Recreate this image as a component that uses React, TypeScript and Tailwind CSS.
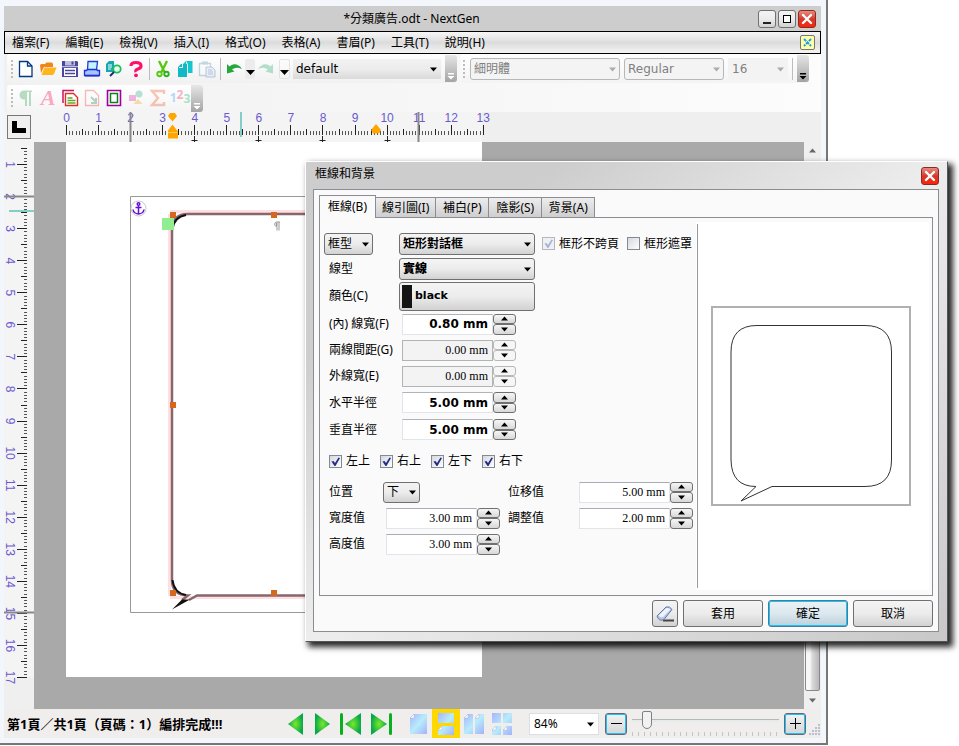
import React from "react";

const UNIT = 32.06;

const UI = "font-['Noto_Sans','Noto_Sans_CJK_TC',sans-serif]";
const WIDE = "font-['DejaVu_Sans','Noto_Sans_CJK_TC',sans-serif]";

function Arrow({ className = "" }: { className?: string }) {
  return (
    <svg width="9" height="5" viewBox="0 0 9 5" className={className} aria-hidden="true">
      <path d="M0 0h9L4.5 5z" fill="currentColor" />
    </svg>
  );
}

function Combo({
  label,
  options,
  wrap,
  select,
  arrow,
  disabled,
}: {
  label: string;
  options: string[];
  wrap: string;
  select: string;
  arrow: string;
  disabled?: boolean;
}) {
  return (
    <span className={`relative block shrink-0 ${wrap}`}>
      <select
        aria-label={label}
        disabled={disabled}
        className={`block h-full w-full appearance-none opacity-100 outline-none ${select}`}
      >
        {options.map((o) => (
          <option key={o}>{o}</option>
        ))}
      </select>
      <Arrow className={`pointer-events-none absolute top-1/2 -mt-0.5 ${arrow}`} />
    </span>
  );
}

const RAISED =
  "border border-[#707070] rounded-[3px] bg-linear-to-b from-[#f4f4f4] from-0% via-[#ececec] via-50% to-[#d2d2d2] to-100%";

/* ---------- window chrome ---------- */

function CloseButton() {
  return (
    <button
      aria-label="關閉"
      className="flex size-[18px] items-center justify-center rounded-[3px] border border-[#8c2a22] bg-linear-to-b from-[#e58a80] via-[#d8352a] via-50% to-[#fb2400]"
    >
      <svg width="12" height="12" viewBox="0 0 12 12">
        <path d="M2 2l8 8M10 2l-8 8" stroke="#fff" strokeWidth="2.4" strokeLinecap="round" />
      </svg>
    </button>
  );
}

function TitleBar() {
  return (
    <header className="flex h-[25px] shrink-0 items-center bg-[#cdcdcd] pr-[5px]">
      <span className="w-[61px]" />
      <h1 className="flex-1 text-center text-[12px] leading-4">*分類廣告.odt - NextGen</h1>
      <div className="flex gap-[2px]">
        <button aria-label="最小化" className={`flex size-[18px] items-end justify-center pb-[3px] ${RAISED}`}>
          <span className="h-[2px] w-[8px] bg-[#222]" />
        </button>
        <button aria-label="最大化" className={`flex size-[18px] items-center justify-center ${RAISED}`}>
          <span className="size-[8px] border border-black bg-white" />
        </button>
        <CloseButton />
      </div>
    </header>
  );
}

const MENUS = ["檔案(F)", "編輯(E)", "檢視(V)", "插入(I)", "格式(O)", "表格(A)", "書眉(P)", "工具(T)", "說明(H)"];

function MenuBar() {
  return (
    <nav className="flex h-[23px] shrink-0 items-center gap-[16px] border border-black bg-linear-to-b from-[#f7f7f7] from-0% via-[#dcdcdc] via-50% to-[#f4f4f4] to-100% pr-[5px] pl-[7px]">
      {MENUS.map((m) => (
        <button key={m} className="text-[12px] leading-4 whitespace-nowrap">
          {m}
        </button>
      ))}
      <button
        aria-label="關閉文件"
        className="ml-auto flex size-[15px] items-center justify-center rounded-[2px] border border-[#777] bg-[#ffffa8]"
      >
        <svg width="9" height="9" viewBox="0 0 9 9">
          <path d="M1 1l7 7M8 1L1 8" stroke="#1e9bf0" strokeWidth="2" strokeDasharray="3 1" />
        </svg>
      </button>
    </nav>
  );
}

/* ---------- toolbars ---------- */

function Grip() {
  return <span className="mx-[2px] h-[18px] w-[2px] border-l-2 border-dotted border-[#bdbdbd]" />;
}

function Sep() {
  return <span className="mx-[2px] h-[22px] w-px bg-[#bcbcc0]" />;
}

function Overflow({ dark }: { dark?: boolean }) {
  return (
    <button
      aria-label="更多工具"
      className="flex h-[27px] w-[12px] shrink-0 items-end justify-center rounded-r-[3px] bg-linear-to-b from-[#e6e6e6] to-[#a4a4a4] pb-[2px]"
    >
      <svg width="8" height="7" viewBox="0 0 8 7" fill={dark ? "#000" : "#fff"}>
        <path d="M1 0h6v1.5H1zM0.5 3h7L4 6.6z" />
      </svg>
    </button>
  );
}

function Tool({ label, children, faded }: { label: string; children: React.ReactNode; faded?: boolean }) {
  return (
    <button aria-label={label} className="flex h-[22px] w-[22px] shrink-0 items-center justify-center">
      <svg width="18" height="18" viewBox="0 0 18 18" fill="none" opacity={faded ? 0.32 : 1}>
        {children}
      </svg>
    </button>
  );
}

function ToolbarMain() {
  return (
    <div className="flex h-[29px] shrink-0 items-center">
      <div className="flex h-full items-center rounded-[3px] bg-linear-to-b from-white to-[#f1f1f1] pl-[2px]">
        <Grip />
        <Tool label="新增">
          <path d="M2.5 1.5h8l4.500 4.500v10.500H2.500z" fill="#fff" stroke="#003a80" strokeWidth="1.3" />
          <path d="M10.500 1.500V6H15" stroke="#003a80" strokeWidth="1.300" />
        </Tool>
        <Tool label="開啟">
          <path d="M1 5.500Q1 4 2.500 4H6l1.500-1.500H13L14 4v3H5L2 13z" fill="#f0861a" />
          <path d="M5.500 7.500h12L15 14q-.5 1-1.500 1H2.500z" fill="#ffb61e" />
        </Tool>
        <Tool label="儲存">
          <path d="M1 1h15l1 1v15H1z" fill="#4a45a0" />
          <path d="M3 8h12v8H3z" fill="#fff" />
          <path d="M4 1h10v4.500H4z" fill="#bdbddd" />
          <path d="M10.500 1.500h2v3h-2z" fill="#4a45a0" />
          <path d="M1 6.700h16" stroke="#fff" strokeWidth=".8" />
          <path d="M4 10.500h10M4 13.500h10" stroke="#4a45a0" strokeWidth="1.400" />
        </Tool>
        <Tool label="列印">
          <path d="M5 1.500h9.500l-1 8.500h-9z" fill="#c4f4ff" stroke="#1c3fd0" strokeWidth="1.300" />
          <path d="M1.500 10.500h2l1-1h9l1 1h2v5h-15z" fill="#a8c4ff" stroke="#1c2fd0" strokeWidth="1.300" />
          <path d="M2 15.700h14" stroke="#1c2fd0" strokeWidth="1.600" />
        </Tool>
        <Tool label="預覽列印">
          <path d="M1 4l3-3h5v11H1z" fill="#15a8b0" />
          <path d="M3 5h4M3 7h4M3 9h3" stroke="#fff" />
          <circle cx="12" cy="9" r="3.700" fill="#eafff0" stroke="#16c060" strokeWidth="1.800" />
          <path d="M9 12l-4 4" stroke="#222c70" strokeWidth="2" />
        </Tool>
        <Tool label="說明">
          <path d="M4 6Q4 2.500 9 2.500T14 6Q14 8 11 9T9 12" stroke="#ff0f6a" strokeWidth="3.200" />
          <circle cx="9" cy="15.300" r="1.900" fill="#ff0f6a" />
        </Tool>
        <Sep />
        <Tool label="剪下">
          <path d="M5 1l5.500 11M13 1L7.500 12" stroke="#55c810" strokeWidth="2.400" />
          <circle cx="5.500" cy="14" r="2.200" stroke="#55c810" strokeWidth="1.900" />
          <circle cx="12.500" cy="14" r="2.200" stroke="#2fae20" strokeWidth="1.900" />
        </Tool>
        <Tool label="複製">
          <path d="M7 4l3-3h6.500v12H7z" fill="#12c8cc" />
          <path d="M2 7l3-3h6v13H2z" fill="#12b8c4" />
          <path d="M6.500 4v3.500H3M11.500 3.500h-1V1.500M11.500 4v9.500" stroke="#fff" strokeWidth=".9" />
        </Tool>
        <Tool label="貼上" faded>
          <path d="M1.500 3.500h11v12h-11z" fill="#fff" stroke="#4a90a8" strokeWidth="1.400" />
          <path d="M4 1.500h6v3H4z" fill="#4a90a8" />
          <path d="M8 7h6l3 3v7H8z" fill="#cde" stroke="#3c58b0" />
          <path d="M10 10h4M10 12h5M10 14h5" stroke="#3c58b0" />
        </Tool>
        <Sep />
        <Tool label="復原">
          <path d="M2 4v9.500l7.500-2-2.500-2Q11 6.500 17 9 13 3.500 8 4.500 6 5 4.500 6.500z" fill="#22a83c" />
        </Tool>
        <button aria-label="復原清單" className="flex h-[20px] w-[10px] items-end justify-center rounded-[2px] bg-[#ececec] pb-[4px]">
          <Arrow />
        </button>
        <Tool label="重做" faded>
          <path d="M16 4v9.500l-7.500-2 2.500-2Q7 6.500 1 9 5 3.500 10 4.500 12 5 13.500 6.500z" fill="#22a870" />
        </Tool>
        <span className="w-[2px]" />
        <button aria-label="重做清單" className="flex h-[20px] w-[11px] items-end justify-center rounded-[2px] border border-[#e2e2e8] pb-[3px]">
          <Arrow />
        </button>
        <Combo
          label="樣式"
          options={["default"]}
          wrap="ml-[3px] h-[20px] w-[148px]"
          select={`bg-linear-to-b from-[#f2f2f2] via-[#ececec] via-50% to-[#dadada] pl-[3px] text-[12px] ${WIDE}`}
          arrow="right-[4px] text-black w-[7px]"
        />
        <span className="w-[4px]" />
        <Overflow />
      </div>
      <div className="ml-[4px] flex h-full items-center bg-linear-to-b from-white to-[#f4f4f4]">
        <Grip />
        <Combo
          label="字型"
          options={["細明體"]}
          disabled
          wrap="ml-[3px] h-[22px] w-[150px]"
          select={`rounded-[3px] border border-[#b4b8b8] bg-[#f4f4f4] pl-[3px] text-[12px] text-[#808080] ${UI}`}
          arrow="right-[4px] w-[7px] text-[#aaa]"
        />
        <Combo
          label="字體樣式"
          options={["Regular"]}
          disabled
          wrap="ml-[4px] h-[22px] w-[100px]"
          select={`rounded-[3px] border border-[#b4b8b8] bg-[#f4f4f4] pl-[3px] text-[12px] text-[#808080] ${WIDE}`}
          arrow="right-[4px] w-[7px] text-[#aaa]"
        />
        <Combo
          label="字級"
          options={["16"]}
          disabled
          wrap="ml-[4px] h-[22px] w-[60px]"
          select={`bg-[#f3f3f3] pl-[4px] text-[12px] text-[#808080] ${WIDE}`}
          arrow="right-[4px] w-[7px] text-[#aaa]"
        />
        <span className="ml-[2px]" />
        <Sep />
        <span className="w-[2px]" />
        <Overflow dark />
      </div>
    </div>
  );
}

function ToolbarInsert() {
  return (
    <div className="flex h-[29px] shrink-0 items-center pt-px">
      <div className="flex h-[27px] items-center rounded-[3px] bg-linear-to-b from-white to-[#f4f4f4] pl-[2px]">
        <Grip />
        <Tool label="段落標記" faded>
          <path d="M15 1.500H7a4.500 4.500 0 0 0 0 9h1V17h2V3h2v14h2V3h1z" fill="#2c9c4c" />
        </Tool>
        <button aria-label="字元" className="w-[22px] font-['Liberation_Serif',serif] text-[22px] leading-[22px] font-bold text-[#f9a8c0] italic">
          A
        </button>
        <Tool label="文字框">
          <path d="M2 14V1.500h11" stroke="#d01060" strokeWidth="1.500" />
          <path d="M4.500 4.500h8l4 4v8h-12z" fill="#fff" stroke="#e03028" strokeWidth="1.400" />
          <path d="M6.500 9h5M6.500 11.500h8M6.500 14h8" stroke="#60a828" strokeWidth="1.500" />
        </Tool>
        <Tool label="插入檔案" faded>
          <path d="M2.500 1.500h8l5 5v10h-13z" fill="#fff" stroke="#e03028" strokeWidth="1.300" />
          <path d="M8 8l5 5M13 9v5H8" stroke="#208050" strokeWidth="2" />
        </Tool>
        <Tool label="圖框">
          <path d="M2.500 1.500h13v15h-13z" fill="#fff" stroke="#a000a0" strokeWidth="1.600" />
          <path d="M5.500 4.500h7v9h-7z" stroke="#108018" strokeWidth="1.500" />
        </Tool>
        <Tool label="圖形" faded>
          <path d="M2 6h7v6H2z" fill="#e020a0" />
          <circle cx="12" cy="5" r="3.500" fill="#20b080" />
          <path d="M11 10l4.500 5h-9z" fill="#f0a000" />
        </Tool>
        <Tool label="數學式" faded>
          <path d="M15 5V2H3l6 7-6 7h12v-3" stroke="#f05020" strokeWidth="2.400" />
        </Tool>
        <button aria-label="編號" className="flex w-[22px] items-center justify-center text-[12px] leading-4 font-bold">
          <span className="text-[#b4d8f8]">1</span>
          <span className="pb-[6px] text-[#f8b0c8]">2</span>
          <span className="pt-[2px] text-[#a8e4c4]">3</span>
        </button>
        <Overflow />
      </div>
    </div>
  );
}

/* ---------- rulers ---------- */

const TICKS = Array.from({ length: 131 }, (_, i) => i);
const H_NUMS = Array.from({ length: 14 }, (_, i) => i);
const V_TICKS = Array.from({ length: 166 }, (_, i) => i + 5);
const V_NUMS = Array.from({ length: 17 }, (_, i) => i + 1);

function HRuler() {
  return (
    <div className="flex h-[30px] shrink-0 items-center bg-[#efefef]">
      <div className="flex h-full items-center bg-[#f4f4f4]">
        <button
          aria-label="定位點類型"
          className="mx-[3px] flex size-[24px] items-center justify-center border border-[#777] bg-[#f0f0f0]"
        >
          <svg width="14" height="12" viewBox="0 0 14 12">
            <path d="M0 0h5v7h9v5H0z" />
          </svg>
        </button>
        <svg width="448" height="30" viewBox="34 0 448 30" className="block overflow-visible" fontFamily="Liberation Sans, sans-serif">
          {TICKS.map((i) => {
            const x = Math.round(66 + (i * UNIT) / 10);
            const top = i % 10 === 0 ? 13 : i % 5 === 0 ? 17 : 19;
            return <rect key={i} x={x} y={top} width="1" height={23 - top} fill={i % 5 ? "#555" : "#222"} />;
          })}
          {[4, 6, 8, 10].map((n) => (
            <path key={n} d={`M${Math.round(66 + n * UNIT) + 0.5} 24v6m-3 -1.500h6`} stroke="#222" />
          ))}
          {H_NUMS.map((n) => (
            <text key={n} x={66.5 + n * UNIT} y="10" textAnchor="middle" fontSize="12" fill="#6a5acd">
              {n}
            </text>
          ))}
          <path d="M130.500 0v30M418.500 0v30" stroke="#888" strokeWidth="2" />
          <path d="M241 0v25" stroke="#84cec8" strokeWidth="2" />
          <path
            d="M170 1h5l2 3-4.500 5.500L168 4zM172.500 12.500l4.500 6h1v8h-10v-8zM376 12l5 6-2 3.500h-6l-2-3.500z"
            fill="#ffa500"
          />
          <path d="M168 20.500h10" stroke="#ffd080" strokeWidth=".8" />
        </svg>
      </div>
    </div>
  );
}

function VRuler() {
  return (
    <div className="w-[30px] shrink-0 overflow-hidden bg-[#efefef]">
      <svg width="30" height="535" viewBox="4 142 30 535" className="block overflow-visible bg-[#f4f4f4]" fontFamily="Liberation Sans, sans-serif">
        {V_TICKS.map((i) => {
          const y = Math.round(132 + (i * UNIT) / 10);
          const left = i % 10 === 0 ? 17 : i % 5 === 0 ? 21 : 24;
          return <rect key={i} x={left} y={y} width={27 - left} height="1" fill={i % 5 ? "#555" : "#222"} />;
        })}
        {V_NUMS.map((n) => (
          <text
            key={n}
            transform={`translate(6 ${132.5 + n * UNIT}) rotate(90)`}
            textAnchor="middle"
            fontSize="12"
            fill="#6a5acd"
          >
            {n}
          </text>
        ))}
        <path d="M4 196.500h30M4 612.500h30" stroke="#888" strokeWidth="2" />
        <path d="M9 211h25" stroke="#84cec8" strokeWidth="2" />
      </svg>
    </div>
  );
}

/* ---------- document ---------- */

function Page() {
  return (
    <div className="h-[535px] w-[416px] bg-white">
      <svg width="416" height="535" viewBox="66 142 416 535" className="block" fill="none">
        <path d="M130.500 196.500h288v416h-288z" stroke="#999" />
        <path d="M169.500 214V596M170 211.500H378M170 597.500H378" stroke="#ffdfe2" strokeWidth="3" />
        <path
          d="M378 214H188Q172 214 172 230V580Q172 595 188 595.500L182 600M189 600L197 595.500H378"
          stroke="#86676c"
          strokeWidth="2.500"
        />
        <path d="M186 215Q174 217 172.500 229M172.500 580Q174 593 186 595" stroke="#111" strokeWidth="2" />
        <path d="M172 609.500l10-10h8z" fill="#111" />
        <path d="M170 212h6v6h-6zM271 212h6v6h-6zM170 402h6v6h-6zM170 590h6v6h-6zM271 590h6v6h-6z" fill="#d2691e" />
        <path d="M162 218h12v12h-12z" fill="#90ee90" />
        <circle cx="138.500" cy="208.500" r="7.500" fill="#fff" stroke="#c8c8c8" />
        <g stroke="#6410d8" strokeWidth="1.500">
          <circle cx="138.500" cy="204" r="1.300" />
          <path d="M138.500 205.500v8M135.500 207.500h6M133 209.500q.5 4 5.500 4.500 5-.5 5.500-4.500" />
        </g>
        <path d="M280 222h-3.500a2.300 2.300 0 0 0 0 4.500h.5v4M279 222v8.500" stroke="#999" />
        <path d="M276 222.500h1.500v3.500H276z" fill="#999" />
      </svg>
    </div>
  );
}

function ScrollBar() {
  return (
    <div className="flex w-[17px] shrink-0 flex-col items-center bg-[#efefef]">
      <button aria-label="向上捲動" className="flex h-[17px] w-full items-center justify-center text-[#666]">
        <Arrow className="w-[7px] rotate-180" />
      </button>
      <div className="mt-[20px] w-[15px] flex-1 rounded-[2px] border border-[#888] bg-linear-to-r from-[#f8f8f8] from-30% via-[#d8d8d8] via-50% to-[#b8b8bc] to-100%" />
      <button aria-label="向下捲動" className="flex h-[18px] w-full items-center justify-center text-[#666]">
        <Arrow className="w-[7px]" />
      </button>
    </div>
  );
}

/* ---------- status bar ---------- */

function NavIcon({ label, d, bar, width }: { label: string; d: string; bar?: number; width: number }) {
  return (
    <button aria-label={label}>
      <svg width={width} height="22" viewBox={`0 0 ${width} 22`} className="block">
        <defs>
          <radialGradient id="leaf">
            <stop offset="0" stopColor="#7be82a" />
            <stop offset="1" stopColor="#06a94a" />
          </radialGradient>
        </defs>
        <path d={d} fill="url(#leaf)" />
        {bar !== undefined && <rect x={bar} y="0" width="3" height="22" rx="1.500" fill="#08b020" />}
      </svg>
    </button>
  );
}

function Sheet({ label, d, folds, active }: { label: string; d: string; folds: string; active?: boolean }) {
  return (
    <button
      aria-label={label}
      className={
        active
          ? "flex h-full w-[28px] items-center justify-center bg-[#ffd800]"
          : "flex h-full w-[28px] items-center justify-center"
      }
    >
      <svg width="20" height="22" viewBox="0 0 20 22">
        <defs>
          <linearGradient id="sheet" x1="0" y1="0" x2="1" y2="1">
            <stop offset="0" stopColor="#a9b4fb" />
            <stop offset=".5" stopColor="#b8ecfb" />
            <stop offset="1" stopColor="#a4b2fb" />
          </linearGradient>
        </defs>
        <path d={d} fill="url(#sheet)" />
        <path d={folds} fill="#fff" stroke="#a8b8c8" strokeWidth=".5" />
      </svg>
    </button>
  );
}

function ZoomButton({ label, d }: { label: string; d: string }) {
  return (
    <button
      aria-label={label}
      className="flex size-[22px] shrink-0 items-center justify-center rounded-[3px] border border-[#667] bg-linear-to-b from-[#f2f2f2] to-[#d6d6d6] ring-1 ring-[#19c3f5] ring-inset"
    >
      <svg width="11" height="11" viewBox="0 0 11 11">
        <path d={d} stroke="#000" />
      </svg>
    </button>
  );
}

function StatusBar() {
  return (
    <footer className="flex h-[29px] shrink-0 items-center bg-[#f0eded] pl-[3px]">
      <p className="w-[281px] text-[13px] leading-4 font-bold whitespace-nowrap">第1頁／共1頁（頁碼：1）編排完成!!!</p>
      <div className="flex gap-[10px]">
        <NavIcon label="上一頁" width={16} d="M0 11L15 0v22z" />
        <NavIcon label="下一頁" width={16} d="M1 0l15 11L1 22z" />
        <NavIcon label="第一頁" width={21} d="M5 11L21 0v22z" bar={0} />
        <NavIcon label="最後一頁" width={21} d="M0 0l16 11L0 22z" bar={18} />
      </div>
      <div className="ml-[12px] flex h-full">
        <Sheet label="單頁" d="M6 1h13v20H2V5z" folds="M2 5l4-4v4z" />
        <Sheet label="連續頁" active d="M2 0h16v10H2zM6 13h12v9H2v-5z" folds="M2 17l4-4v4z" />
        <Sheet label="雙頁" d="M4 1h5v20H0V5zM15 1h5v20h-9V5z" folds="M0 5l4-4v4zM11 5l4-4v4z" />
        <Sheet label="連續雙頁" d="M0 0h9v10H0zM11 0h9v10h-9zM4 13h5v9H0v-5zM15 13h5v9h-9v-5z" folds="M0 17l4-4v4zM11 17l4-4v4z" />
      </div>
      <Combo
        label="顯示比例"
        options={["84%"]}
        wrap="ml-[13px] h-[22px] w-[70px]"
        select={`border border-[#dcdfe6] bg-white pl-[4px] text-[12px] ${UI}`}
        arrow="right-[5px] w-[7px] text-black"
      />
      <div className="ml-[6px] flex min-w-0 flex-1 items-center gap-[5px]">
        <ZoomButton label="縮小" d="M0 5.500h11" />
        <div className="flex h-[24px] min-w-0 flex-1 flex-col justify-between">
          <input
            type="range"
            aria-label="縮放"
            defaultValue={7}
            className="h-[18px] w-full appearance-none bg-transparent [&::-webkit-slider-runnable-track]:h-[3px] [&::-webkit-slider-runnable-track]:border-t [&::-webkit-slider-runnable-track]:border-[#b4b8b8] [&::-webkit-slider-runnable-track]:bg-[#e6eaea] [&::-webkit-slider-thumb]:mt-[-9px] [&::-webkit-slider-thumb]:h-[18px] [&::-webkit-slider-thumb]:w-[10px] [&::-webkit-slider-thumb]:appearance-none [&::-webkit-slider-thumb]:rounded-t-[2px] [&::-webkit-slider-thumb]:rounded-b-[5px] [&::-webkit-slider-thumb]:border [&::-webkit-slider-thumb]:border-[#808080] [&::-webkit-slider-thumb]:bg-[#f2f2f2]"
          />
          <span className="h-[4px] bg-[repeating-linear-gradient(to_right,#c4c4c4_0_1px,transparent_1px_6px)]" />
        </div>
        <ZoomButton label="放大" d="M0 5.500h11M5.500 0v11" />
        <svg width="12" height="24" viewBox="0 0 12 24" fill="#b8c0d0" className="-ml-[2px] shrink-0">
          <path d="M9 12h2v2H9zM9 15h2v2H9zM6 15h2v2H6zM9 18h2v2H9zM6 18h2v2H6zM3 18h2v2H3zM9 21h2v2H9zM6 21h2v2H6zM3 21h2v2H3zM0 21h2v2H0z" />
        </svg>
      </div>
    </footer>
  );
}

/* ---------- dialog ---------- */

const TABS = ["框線(B)", "線引圖(I)", "補白(P)", "陰影(S)", "背景(A)"];

function Spin({
  id,
  value,
  bold,
  disabled,
  label,
}: {
  id?: string;
  value: string;
  bold?: boolean;
  disabled?: boolean;
  label: string;
}) {
  const face = bold
    ? "border-[#e2e4ea] border-t-[#b0b4b8] bg-white font-['DejaVu_Sans',sans-serif] font-bold"
    : disabled
      ? "border-[#b0b4b4] bg-[#f3f3f3] font-['Liberation_Serif',serif]"
      : "border-[#e2e4ea] border-t-[#a8acb4] bg-white font-['Liberation_Serif',serif]";
  const step = disabled ? "border-[#b8b8b8] bg-[#f6f6f6]" : "border-[#707070] bg-linear-to-b from-[#f6f6f6] to-[#d8d8d8]";
  return (
    <span className="flex h-[21px] shrink-0">
      <input
        id={id}
        defaultValue={value}
        readOnly={disabled}
        className={`h-full w-[91px] border pr-[4px] text-right text-[12px] outline-none ${face}`}
      />
      <span className="flex w-[23px] flex-col">
        <button aria-label={`${label} 增加`} className={`flex flex-1 items-center justify-center rounded-[3px] border ${step}`}>
          <Arrow className="w-[7px] rotate-180" />
        </button>
        <button aria-label={`${label} 減少`} className={`flex flex-1 items-center justify-center rounded-[3px] border ${step}`}>
          <Arrow className="w-[7px]" />
        </button>
      </span>
    </span>
  );
}

function Check({ label, checked, muted }: { label: string; checked?: boolean; muted?: boolean }) {
  return (
    <label className="flex items-center gap-[4px] whitespace-nowrap">
      <span className="relative size-[13px]">
        <input
          type="checkbox"
          defaultChecked={checked}
          className={
            muted
              ? "peer block size-[13px] appearance-none border border-[#b4b8bc] bg-[#eef0f4]"
              : "peer block size-[13px] appearance-none border border-[#858a90] bg-linear-to-br from-[#d4d8e0] to-white"
          }
        />
        <svg
          viewBox="0 0 13 13"
          className={
            muted
              ? "pointer-events-none absolute inset-0 hidden text-[#a8b4d8] peer-checked:block"
              : "pointer-events-none absolute inset-0 hidden text-[#262c84] peer-checked:block"
          }
        >
          <path d="M2.500 6.500l2-.5 1.500 2L9.500 2.500l1.500.5L6.500 11H5.500z" fill="currentColor" />
        </svg>
      </span>
      {label}
    </label>
  );
}

function SpinRow({ id, label, value, bold, disabled, row }: { id: string; label: string; value: string; bold?: boolean; disabled?: boolean; row: string }) {
  return (
    <div className={`flex items-center ${row}`}>
      <label htmlFor={id} className="w-[73px] shrink-0 whitespace-nowrap">
        {label}
      </label>
      <Spin id={id} label={label} value={value} bold={bold} disabled={disabled} />
    </div>
  );
}

function BorderForm() {
  return (
    <form className="flex-1 pt-[13px] pl-[9px]" onSubmit={(e) => e.preventDefault()}>
      <div className="flex h-[25px] items-center">
        <Combo
          label="框型選單"
          options={["框型"]}
          wrap="-ml-[5px] h-[22px] w-[49px]"
          select={`pl-[3px] ${RAISED}`}
          arrow="right-[4px] w-[7px]"
        />
        <Combo
          label="框型"
          options={["矩形對話框"]}
          wrap="ml-[26px] h-[22px] w-[136px]"
          select={`pl-[3px] font-bold ${RAISED}`}
          arrow="right-[4px] w-[7px]"
        />
        <div className="ml-[7px] flex gap-[8px]">
          <Check label="框形不跨頁" checked muted />
          <Check label="框形遮罩" />
        </div>
      </div>
      <div className="flex h-[25px] items-center">
        <span className="w-[70px]">線型</span>
        <Combo
          label="線型"
          options={["實線"]}
          wrap="h-[22px] w-[136px]"
          select={`pl-[3px] font-black ${RAISED}`}
          arrow="right-[4px] w-[7px]"
        />
      </div>
      <div className="flex h-[30px] items-center">
        <span className="w-[70px]">顏色(C)</span>
        <button className={`flex h-[29px] w-[136px] items-center gap-[3px] pl-[2px] text-[11px] font-black font-['DejaVu_Sans',sans-serif] ${RAISED}`}>
          <span className="h-[23px] w-[10px] bg-[#141414]" />
          black
        </button>
      </div>
      <SpinRow id="inner" row="h-[26px]" label="(內) 線寬(F)" value="0.80 mm" bold />
      <SpinRow id="gap" row="h-[26px]" label="兩線間距(G)" value="0.00 mm" disabled />
      <SpinRow id="outer" row="h-[26px]" label="外線寬(E)" value="0.00 mm" disabled />
      <SpinRow id="rx" row="h-[27px]" label="水平半徑" value="5.00 mm" bold />
      <SpinRow id="ry" row="h-[27px]" label="垂直半徑" value="5.00 mm" bold />
      <div className="flex h-[36px] items-center gap-[10px]">
        <Check label="左上" checked />
        <Check label="右上" checked />
        <Check label="左下" checked />
        <Check label="右下" checked />
      </div>
      <div className="grid w-max auto-rows-[26px] grid-cols-[57px_122px_71px_auto] items-center">
        <span>位置</span>
        <Combo label="位置" options={["下"]} wrap="-ml-[3px] h-[21px] w-[37px]" select={`pl-[3px] ${RAISED}`} arrow="right-[4px] w-[7px]" />
        <label htmlFor="shift">位移值</label>
        <Spin id="shift" label="位移值" value="5.00 mm" />
        <label htmlFor="w">寬度值</label>
        <Spin id="w" label="寬度值" value="3.00 mm" />
        <label htmlFor="adj">調整值</label>
        <Spin id="adj" label="調整值" value="2.00 mm" />
        <label htmlFor="h">高度值</label>
        <Spin id="h" label="高度值" value="3.00 mm" />
      </div>
    </form>
  );
}

function Preview() {
  return (
    <div className="mt-[4px] mr-[3px] mb-[5px] flex w-[233px] items-center justify-center bg-white py-[2px] pl-px">
      <div className="flex h-full w-full items-center justify-center border-l border-[#999]">
        <div className="mr-[6px] size-[200px] border-2 border-[#b0b0b0]">
          <svg viewBox="714 308 196 196" className="block" fill="none">
            <path
              d="M758 325.500H866Q892.500 325.500 892.500 352V460Q892.500 486.500 866 486.500H773L742 501 757 486.500Q732.500 486.500 732 460V352Q732 325.500 758 325.500z"
              stroke="#333"
            />
          </svg>
        </div>
      </div>
    </div>
  );
}

function Dialog() {
  return (
    <section
      role="dialog"
      aria-label="框線和背景"
      className="absolute top-[161px] left-[305px] flex w-[643px] flex-col border border-t-white border-r-[#555] border-b-[#555] border-l-white bg-linear-to-br from-[#cdcdcd] from-20% via-[#ededed] via-50% to-[#c8c8c8] pr-[8px] pb-[9px] pl-[7px] text-[12px] leading-4 shadow-[4px_4px_6px_1px_rgba(0,0,0,0.85)]"
    >
      <div className="flex h-[27px] items-center justify-between pl-[2px]">
        <h2 className="pb-[4px]">框線和背景</h2>
        <CloseButton />
      </div>
      <div className="border border-[#8c8c94] bg-[#fafafa] px-[5px] pt-[5px] pb-[4px]">
        <div role="tablist" className="-mb-px flex items-end">
          {TABS.map((t, i) => (
            <button
              key={t}
              role="tab"
              aria-selected={i === 0}
              className={
                i === 0
                  ? "relative h-[23px] border border-b-0 border-[#8c8c94] bg-[#fafafa] px-[8px]"
                  : "h-[21px] min-w-[53px] border border-l-0 border-[#8c8c94] bg-linear-to-b from-[#ededed] to-[#cfcfcf] px-[6px]"
              }
            >
              {t}
            </button>
          ))}
        </div>
        <div className="flex h-[379px] border border-[#8c8c94]">
          <BorderForm />
          <Preview />
        </div>
        <div className="flex justify-end gap-[5px] pt-[4px]">
          <button aria-label="清除" className={`flex h-[27px] w-[26px] items-center justify-center ${RAISED}`}>
            <svg width="20" height="18" viewBox="0 0 20 18">
              <path d="M8 15.500h11" stroke="#444" strokeWidth="2" />
              <path d="M2 11L11 2q4-1 6 2.500L9 14.500q-5 2.500-7-3.500z" fill="#b4c4e4" stroke="#6478a8" />
              <path d="M3.500 10.500L11.500 3q2.500-.5 4 1.500L8 12q-3 1-4.500-1.500z" fill="#eef4ff" />
            </svg>
          </button>
          <button className={`h-[27px] w-[80px] ${RAISED}`}>套用</button>
          <button className="h-[27px] w-[80px] rounded-[3px] border border-[#4c7c94] bg-linear-to-b from-[#eaf2f6] via-[#dce8ee] via-50% to-[#bcd0dc] ring-1 ring-[#19c3f5] ring-inset">
            確定
          </button>
          <button className={`h-[27px] w-[80px] ${RAISED}`}>取消</button>
        </div>
      </div>
    </section>
  );
}

export default function App() {
  return (
    <div className={`relative h-screen overflow-hidden bg-white text-black ${UI}`}>
      <main className="mr-[131px] flex h-[calc(100vh-1px)] flex-col border-r-2 border-b-2 border-[#777] bg-[#f3f6fb] pt-[6px] pr-[5px] pb-[5px] pl-[4px]">
        <TitleBar />
        <MenuBar />
        <div className="bg-linear-to-r from-[#f1f1f1] to-[#fcfcfc] pl-[3px]">
          <ToolbarMain />
          <ToolbarInsert />
        </div>
        <HRuler />
        <div className="flex min-h-0 flex-1">
          <VRuler />
          <div className="min-w-0 flex-1 overflow-hidden bg-[#a9a9a9] pl-[32px]">
            <Page />
          </div>
          <ScrollBar />
        </div>
        <StatusBar />
      </main>
      <Dialog />
    </div>
  );
}
